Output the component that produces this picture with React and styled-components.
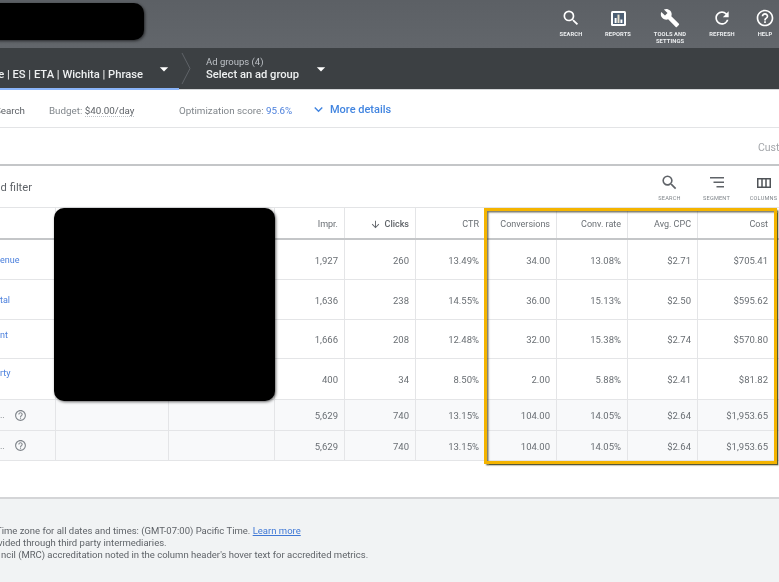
import React from "react";
import styled, { createGlobalStyle } from "styled-components";
import {
  MdSearch, MdBuild, MdRefresh, MdHelpOutline, MdArrowDropDown,
  MdKeyboardArrowDown, MdArrowDownward,
} from "react-icons/md";

const Global = createGlobalStyle`
  html, body { margin: 0; padding: 0; background: #fff; }
  body { font-family: Roboto, "Liberation Sans", sans-serif; }
`;

const Page = styled.div`
  position: relative;
  width: 779px;
  height: 582px;
  overflow: hidden;
  display: flex;
  flex-direction: column;
  background: #fff;
  filter: blur(0.35px);
`;

const TopBar = styled.header`
  height: 48px;
  flex: none;
  display: flex;
  justify-content: flex-end;
  background: linear-gradient(#5c6065, #62666b);
  margin-right: -6px;
`;
const TopItem = styled.div`
  width: ${(p) => p.$w}px;
  padding-top: 8px;
  display: flex;
  flex-direction: column;
  align-items: center;
  color: #fff;
  box-sizing: border-box;
`;
const TopIcon = styled.div`
  height: 20px;
  display: flex;
  align-items: center;
  justify-content: center;
  font-size: 20px;
`;
const TopLabel = styled.div`
  margin-top: 3px;
  font-size: 5.8px;
  line-height: 7px;
  font-weight: 700;
  letter-spacing: 0.1px;
  text-align: center;
  text-transform: uppercase;
  color: #eceef0;
`;

const NavBar = styled.nav`
  height: 42px;
  flex: none;
  display: flex;
  background: #3c4043;
  box-sizing: border-box;
  border-bottom: 1px solid #d5d7d9;
`;
const CampaignCrumb = styled.div`
  width: 179px;
  flex: none;
  box-sizing: border-box;
  border-bottom: 2px solid #8ab4f8;
  margin-bottom: -1px;
  display: flex;
  justify-content: flex-end;
  align-items: flex-end;
  overflow: hidden;
  color: #fff;
  padding-bottom: 6px;
`;
const CrumbTitle = styled.div`
  font-size: 11.2px;
  line-height: 14px;
  font-weight: 500;
  white-space: nowrap;
  color: #eef0f1;
`;
const Caret = styled(MdArrowDropDown)`
  flex: none;
  font-size: 20px;
  color: #fff;
  margin: ${(p) => p.$m};
`;
const CrumbSep = styled.svg`
  flex: none;
  width: 27px;
  height: 41px;
`;
const AdGroups = styled.div`
  display: flex;
  flex-direction: column;
  gap: 1px;
  padding-top: 8px;
  width: 105px;
`;
const CrumbLabel = styled.div`
  font-size: 9.5px;
  line-height: 11px;
  color: #bdc1c6;
`;

const Summary = styled.div`
  height: 38px;
  flex: none;
  box-sizing: border-box;
  border-bottom: 1px solid #e3e4e6;
  padding-top: 3px;
  display: flex;
  align-items: center;
  font-size: 9.8px;
  color: #80868b;
`;
const ClipLeft = styled.div`
  width: ${(p) => p.$w}px;
  flex: none;
  display: flex;
  justify-content: flex-end;
  overflow: hidden;
  white-space: nowrap;
`;
const DarkText = styled.span`
  color: #5f6368;
`;
const Budget = styled.div`
  margin-left: 24px;
  width: 130px;
  flex: none;
`;
const Dotted = styled.span`
  color: #5f6368;
  border-bottom: 1px dotted #bdc1c6;
`;
const Score = styled.div`
  width: 131px;
  flex: none;
  white-space: nowrap;
`;
const Blue = styled.span`
  color: #4a7fdc;
`;
const MoreDetails = styled.div`
  display: flex;
  align-items: center;
  gap: 3px;
  color: #4285e0;
  font-size: 11px;
  font-weight: 500;
  margin-top: -1px;
`;

const CustomRow = styled.div`
  height: 38px;
  flex: none;
  box-sizing: border-box;
  border-bottom: 2px solid #c4c6c8;
  display: flex;
  justify-content: flex-end;
  align-items: center;
  overflow: hidden;
  color: #a4a7ab;
  font-size: 10.5px;
  white-space: nowrap;
  padding-top: 3px;
`;
const CustomText = styled.div`
  width: 21px;
  overflow: hidden;
`;

const FilterRow = styled.div`
  height: 42px;
  flex: none;
  box-sizing: border-box;
  border-bottom: 1px solid #e3e4e6;
  padding-top: 2px;
  display: flex;
  align-items: center;
  justify-content: space-between;
  font-size: 11.2px;
  color: #5f6368;
`;
const Tools = styled.div`
  display: flex;
  margin-right: -8px;
`;
const Tool = styled.div`
  width: 47px;
  display: flex;
  flex-direction: column;
  align-items: center;
  color: #5f6368;
  white-space: nowrap;
`;
const ToolIcon = styled.div`
  height: 20px;
  margin-top: -1px;
  display: flex;
  align-items: center;
  justify-content: center;
  font-size: 19px;
`;
const ToolLabel = styled.div`
  font-size: 5.6px;
  line-height: 8px;
  margin-top: 1px;
  letter-spacing: 0.2px;
  color: #80868b;
  text-transform: uppercase;
`;

const Row = styled.div`
  height: ${(p) => p.$h}px;
  flex: none;
  box-sizing: border-box;
  display: grid;
  grid-template-columns: 55px 113px 106px 70px 71px 70px 71px 71px 70px 82px;
  background: ${(p) => (p.$total ? "#f8f9fa" : "#fff")};
  border-bottom: ${(p) => (p.$head ? "2px solid #c4c6c8" : "1px solid #e4e5e7")};
`;
const Cell = styled.div`
  display: flex;
  align-items: center;
  justify-content: flex-end;
  gap: 4px;
  box-sizing: border-box;
  padding-top: ${(p) => (p.$head ? 2 : 1)}px;
  padding-right: ${(p) => (p.$last ? 11 : 6)}px;
  border-left: 1px solid #e4e5e7;
  font-size: ${(p) => (p.$head ? 9 : 9.5)}px;
  font-weight: ${(p) => (p.$strong ? 500 : 400)};
  color: ${(p) => (p.$strong ? "#5f6368" : "#6a6f74")};
  white-space: nowrap;
`;
const NameCell = styled.div`
  box-sizing: border-box;
  display: flex;
  align-items: center;
  overflow: hidden;
  font-size: 9px;
  color: #4a7fdc;
  padding-bottom: ${(p) => p.$lift || 0}px;
  white-space: nowrap;
`;
const EmptyCell = styled.div`
  border-left: 1px solid #e4e5e7;
`;
const TotalName = styled.div`
  display: flex;
  align-items: center;
  color: #6f7479;
  font-size: 9px;
  gap: 9px;
  svg { font-size: 13px; color: #80868b; }
`;

const Spacer = styled.div`
  flex: 1;
`;

const Footer = styled.footer`
  height: 85px;
  flex: none;
  box-sizing: border-box;
  border-top: 2px solid #d4d5d7;
  background: #f1f3f4;
  padding-top: 26px;
  font-size: 9.5px;
  line-height: 12px;
  color: #5f6368;
`;
const FootLine = styled.div`
  white-space: nowrap;
  margin-left: ${(p) => p.$x}px;
`;
const FootLink = styled.span`
  color: #3f78d6;
  text-decoration: underline;
`;

const Redaction = styled.div`
  position: absolute;
  left: ${(p) => p.$x}px;
  top: ${(p) => p.$y}px;
  width: ${(p) => p.$w}px;
  height: ${(p) => p.$h}px;
  background: #000;
  border-radius: 10px;
  box-shadow: 1px 1px 3px rgba(0, 0, 0, 0.6);
`;
const Highlight = styled.div`
  position: absolute;
  left: 484px;
  top: 208px;
  width: 293px;
  height: 256px;
  box-sizing: border-box;
  border: 3.5px solid #f4b400;
  box-shadow: 1.5px 1.5px 1.5px rgba(60, 60, 20, 0.85), inset 1.5px 1.5px 1.5px rgba(60, 60, 40, 0.7);
  pointer-events: none;
`;

const ReportsIcon = () => (
  <svg width="17" height="17" viewBox="0 0 17 17">
    <rect x="1" y="1" width="15" height="15" rx="1.5" fill="#fff" />
    <rect x="3" y="3" width="11" height="11" fill="#4d5f73" />
    <rect x="4.6" y="8" width="2" height="5" fill="#fff" />
    <rect x="7.5" y="4.6" width="2" height="8.4" fill="#e9e2d0" />
    <rect x="10.4" y="9.5" width="2" height="3.5" fill="#fff" />
  </svg>
);
const SegmentIcon = () => (
  <svg width="14" height="11" viewBox="0 0 14 11" fill="#5f6368">
    <rect x="0" y="0" width="14" height="1.5" />
    <rect x="3.5" y="4.5" width="10.5" height="1.5" />
    <rect x="6.5" y="9" width="7.5" height="1.5" />
  </svg>
);
const ColumnsIcon = () => (
  <svg width="14" height="10" viewBox="0 0 14 10" fill="none" stroke="#4f5357" strokeWidth="1.5">
    <rect x="0.75" y="0.75" width="12.5" height="8.5" />
    <path d="M5 1v8M9 1v8" />
  </svg>
);

const headers = ["Impr.", "Clicks", "CTR", "Conversions", "Conv. rate", "Avg. CPC", "Cost"];
const rows = [
  { h: 40, name: "enue", lift: 0, v: ["1,927", "260", "13.49%", "34.00", "13.08%", "$2.71", "$705.41"] },
  { h: 40, name: "tal", lift: 0, v: ["1,636", "238", "14.55%", "36.00", "15.13%", "$2.50", "$595.62"] },
  { h: 39, name: "nt", lift: 9, v: ["1,666", "208", "12.48%", "32.00", "15.38%", "$2.74", "$570.80"] },
  { h: 41, name: "rty", lift: 12, v: ["400", "34", "8.50%", "2.00", "5.88%", "$2.41", "$81.82"] },
];
const total = ["5,629", "740", "13.15%", "104.00", "14.05%", "$2.64", "$1,953.65"];

const top = [
  { w: 48, label: "Search", icon: <MdSearch /> },
  { w: 46, label: "Reports", icon: <ReportsIcon /> },
  { w: 58, label: <>Tools and<br />settings</>, icon: <MdBuild /> },
  { w: 46, label: "Refresh", icon: <MdRefresh /> },
  { w: 40, label: "Help", icon: <MdHelpOutline /> },
];

export default function App() {
  return (
    <Page>
      <Global />
      <TopBar>
        {top.map((t, i) => (
          <TopItem key={i} $w={t.w}>
            <TopIcon>{t.icon}</TopIcon>
            <TopLabel>{t.label}</TopLabel>
          </TopItem>
        ))}
      </TopBar>
      <NavBar>
        <CampaignCrumb>
          <CrumbTitle>e | ES | ETA | Wichita | Phrase</CrumbTitle>
          <Caret $m="0 5px 3px 11px" />
        </CampaignCrumb>
        <CrumbSep viewBox="0 0 27 41">
          <path d="M3 5l8 15.5L3 36" fill="none" stroke="#5f6368" strokeWidth="1" />
        </CrumbSep>
        <AdGroups>
          <CrumbLabel>Ad groups (4)</CrumbLabel>
          <CrumbTitle>Select an ad group</CrumbTitle>
        </AdGroups>
        <Caret $m="11px 0 0 0" />
      </NavBar>
      <Summary>
        <ClipLeft $w={25}><DarkText>Search</DarkText></ClipLeft>
        <Budget>Budget: <Dotted>$40.00/day</Dotted></Budget>
        <Score>Optimization score: <Blue>95.6%</Blue></Score>
        <MoreDetails>
          <MdKeyboardArrowDown size={17} />
          More details
        </MoreDetails>
      </Summary>
      <CustomRow><CustomText>Custom</CustomText></CustomRow>
      <FilterRow>
        <ClipLeft $w={32}>Add filter</ClipLeft>
        <Tools>
          <Tool><ToolIcon><MdSearch /></ToolIcon><ToolLabel>Search</ToolLabel></Tool>
          <Tool><ToolIcon><SegmentIcon /></ToolIcon><ToolLabel>Segment</ToolLabel></Tool>
          <Tool><ToolIcon><ColumnsIcon /></ToolIcon><ToolLabel>Columns</ToolLabel></Tool>
        </Tools>
      </FilterRow>
      <Row $h={32} $head>
        <NameCell />
        <EmptyCell />
        <EmptyCell />
        {headers.map((h, i) => (
          <Cell key={h} $head $strong={h === "Clicks"} $last={i === 6}>
            {h === "Clicks" && <MdArrowDownward size={11} />}
            {h}
          </Cell>
        ))}
      </Row>
      {rows.map((r) => (
        <Row key={r.name} $h={r.h}>
          <NameCell $lift={r.lift}>{r.name}</NameCell>
          <EmptyCell />
          <EmptyCell />
          {r.v.map((v, i) => <Cell key={i} $last={i === 6}>{v}</Cell>)}
        </Row>
      ))}
      {[31, 30].map((h) => (
        <Row key={h} $h={h} $total>
          <NameCell>
            <TotalName>..<MdHelpOutline /></TotalName>
          </NameCell>
          <EmptyCell />
          <EmptyCell />
          {total.map((v, i) => <Cell key={i} $last={i === 6}>{v}</Cell>)}
        </Row>
      ))}
      <Spacer />
      <Footer>
        <FootLine $x={-4}>Time zone for all dates and times: (GMT-07:00) Pacific Time. <FootLink>Learn more</FootLink></FootLine>
        <FootLine $x={-2}>vided through third party intermediaries.</FootLine>
        <FootLine $x={1}>ncil (MRC) accreditation noted in the column header's hover text for accredited metrics.</FootLine>
      </Footer>
      <Redaction $x={-20} $y={3} $w={164} $h={37} />
      <Redaction $x={54} $y={208} $w={221} $h={193} />
      <Highlight />
    </Page>
  );
}
